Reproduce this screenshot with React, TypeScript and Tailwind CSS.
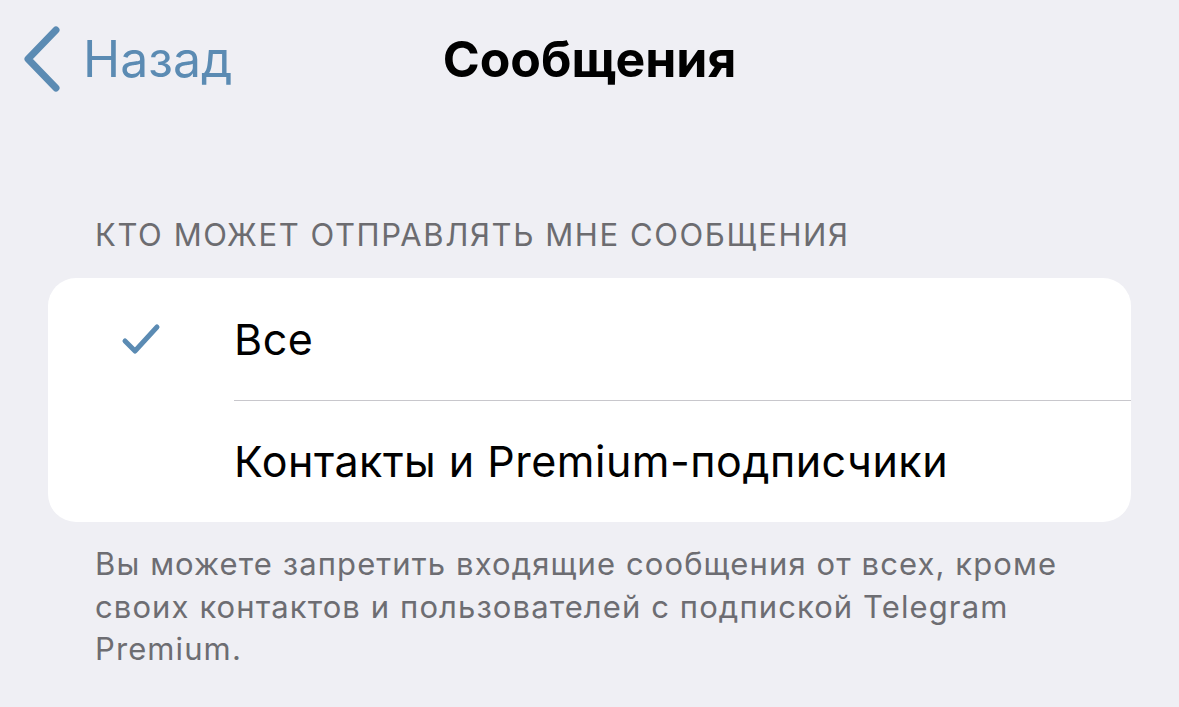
import React from "react";

const font = { fontFamily: "Inter, 'Noto Sans', sans-serif" };

function Chevron() {
  return (
    <svg width="40" height="66" viewBox="0 0 40 66" fill="none">
      <path d="M34 4 L6 33 L34 62" stroke="#5b8bb3" strokeWidth="7" strokeLinecap="round" strokeLinejoin="round" />
    </svg>
  );
}

function Check() {
  return (
    <svg width="40" height="32" viewBox="0 0 40 32" fill="none">
      <path d="M4 18 L14 28 L36 4" stroke="#5b8bb3" strokeWidth="5" strokeLinecap="round" strokeLinejoin="round" />
    </svg>
  );
}

const options = [
  { label: "Все", checked: true },
  { label: "Контакты и Premium-подписчики", checked: false },
];

export default function App() {
  return (
    <div className="w-[1179px] h-[707px] bg-[#efeff4] overflow-hidden" style={font}>
      {/* Nav bar */}
      <div className="relative h-[118px] flex items-center">
        <div className="flex items-center pl-[22px] gap-[21px] text-[#5b8bb3]">
          <Chevron />
          <span className="text-[50px] leading-none">Назад</span>
        </div>
        <div className="absolute inset-0 flex items-center justify-center">
          <span className="text-[50px] font-bold leading-none text-black">Сообщения</span>
        </div>
      </div>

      {/* Section header */}
      <div className="mt-[101px] pl-[95px] text-[31px] leading-none tracking-[1.6px] text-[#6c6c70] uppercase">
        Кто может отправлять мне сообщения
      </div>

      {/* Options card */}
      <div className="mx-[48px] mt-[28px] bg-white rounded-[28px] overflow-hidden">
        {options.map((o, i) => (
          <div key={o.label} className="flex h-[122px] items-stretch">
            <div className="w-[186px] flex items-center pl-[73px]">
              {o.checked && <Check />}
            </div>
            <div className={`flex-1 flex items-center ${i > 0 ? "border-t border-[#c8c7cc]" : ""}`}>
              <span className="text-[43px] leading-none tracking-[0.5px] text-black">{o.label}</span>
            </div>
          </div>
        ))}
      </div>

      {/* Footer */}
      <div className="mt-[21px] pl-[95px] pr-[100px] text-[31px] leading-[42.5px] tracking-[1.1px] text-[#6d6d72]">
        Вы можете запретить входящие сообщения от всех, кроме своих контактов и пользователей с подпиской Telegram Premium.
      </div>
    </div>
  );
}
